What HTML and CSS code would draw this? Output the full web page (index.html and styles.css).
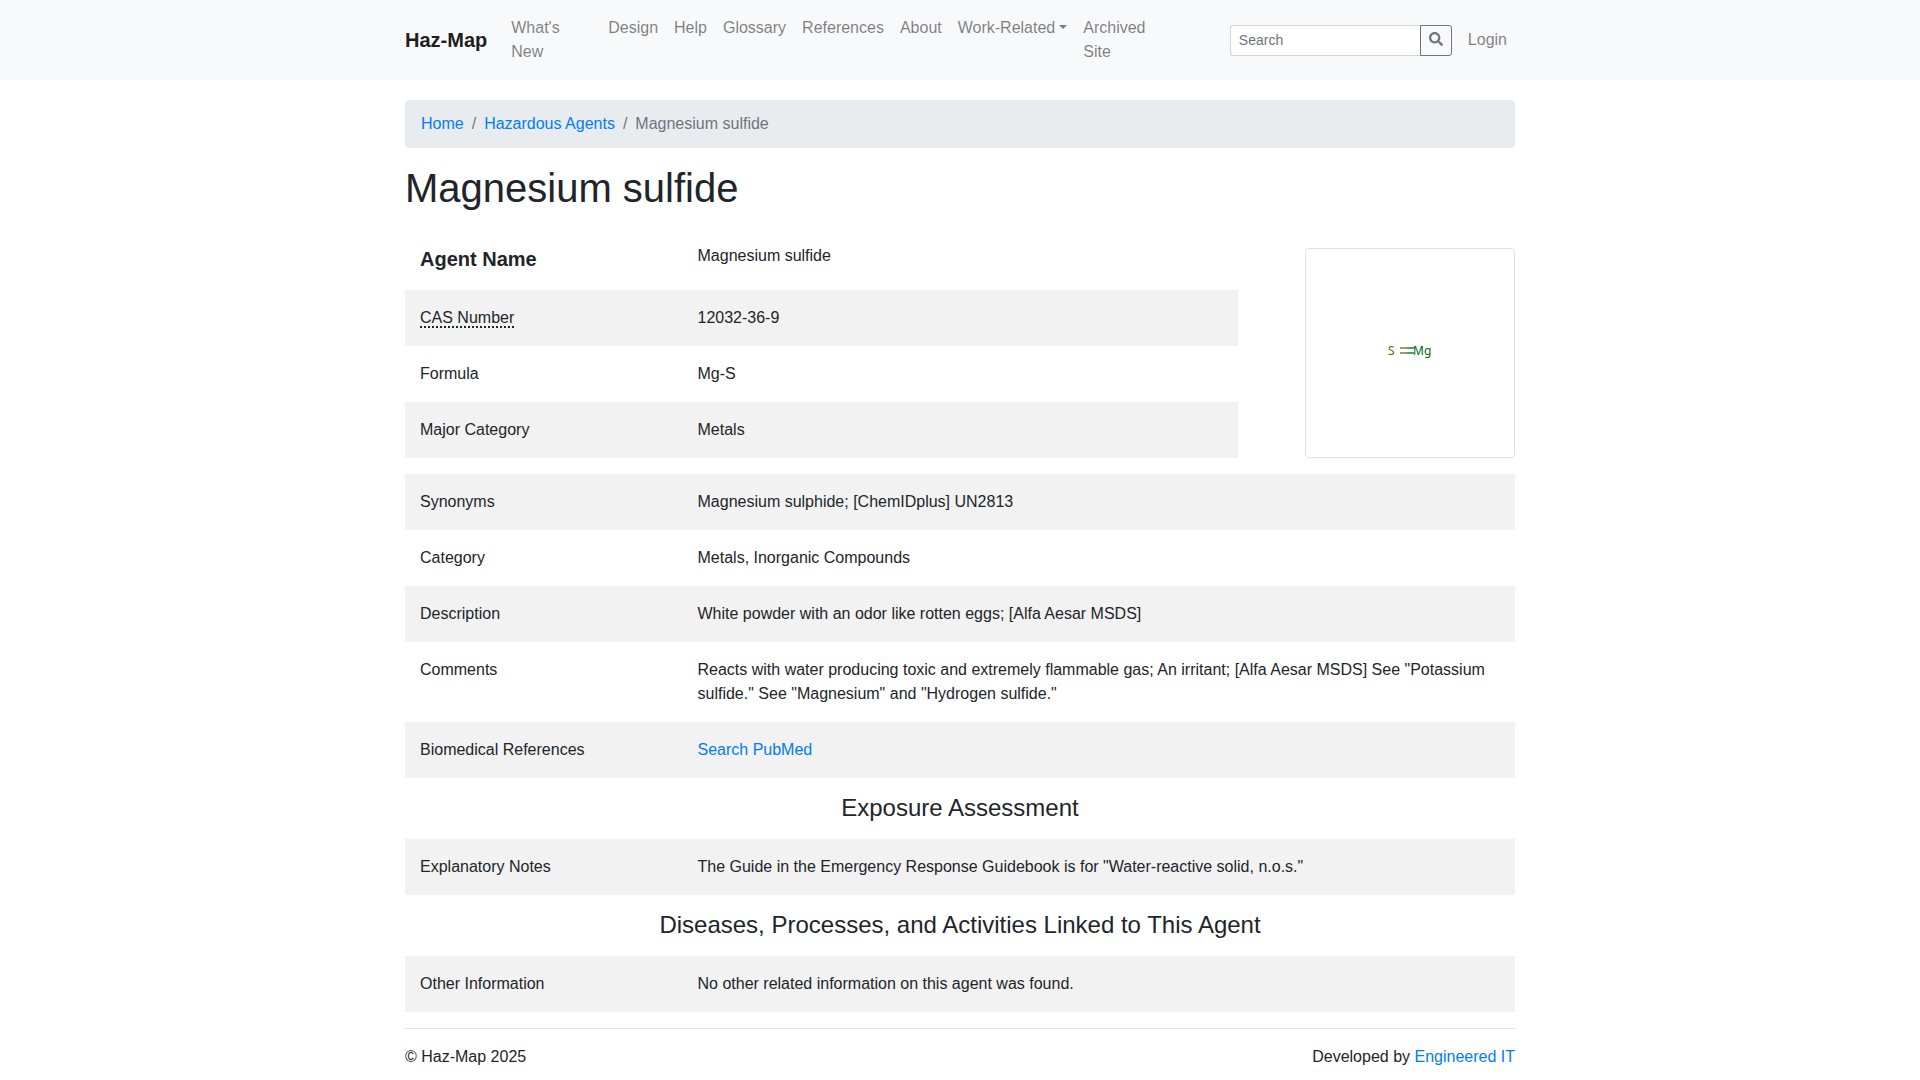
FILE: index.html
```html
<!DOCTYPE html>
<html lang="en">
<head>
  <meta charset="utf-8">
  <meta name="viewport" content="width=device-width, initial-scale=1">
  <title>Magnesium sulfide - Haz-Map</title>
  <link rel="stylesheet" href="styles.css">
</head>
<body>
  <header class="navbar">
    <div class="container navbar-inner">
      <a class="brand" href="#">Haz-Map</a>
      <nav class="nav-main" aria-label="Main">
        <ul class="nav-list">
          <li class="nav-wide"><a class="nav-link" href="#">What's<br>New</a></li>
          <li><a class="nav-link" href="#">Design</a></li>
          <li><a class="nav-link" href="#">Help</a></li>
          <li><a class="nav-link" href="#">Glossary</a></li>
          <li><a class="nav-link" href="#">References</a></li>
          <li><a class="nav-link" href="#">About</a></li>
          <li><a class="nav-link dropdown" href="#">Work-Related</a></li>
          <li><a class="nav-link" href="#">Archived<br>Site</a></li>
        </ul>
      </nav>
      <form class="search">
        <input class="search-input" type="search" placeholder="Search" aria-label="Search">
        <button class="search-button" type="submit" aria-label="Submit search">
          <svg class="search-icon" viewBox="0 0 512 512" aria-hidden="true"><path fill="currentColor" d="M505 442.7L405.3 343c-4.500-4.500-10.600-7-17-7H372c27.600-35.300 44-79.700 44-128C416 93.100 322.900 0 208 0S0 93.100 0 208s93.100 208 208 208c48.300 0 92.700-16.400 128-44v16.300c0 6.400 2.500 12.500 7 17l99.700 99.700c9.400 9.400 24.600 9.400 33.900 0l28.300-28.300c9.400-9.400 9.400-24.600.1-34zM208 336c-70.700 0-128-57.200-128-128 0-70.700 57.200-128 128-128 70.700 0 128 57.200 128 128 0 70.700-57.200 128-128 128z"/></svg>
        </button>
      </form>
      <a class="nav-link" href="#">Login</a>
    </div>
  </header>

  <main class="container">
    <nav aria-label="Breadcrumb">
      <ol class="breadcrumb">
        <li><a href="#">Home</a></li>
        <li><a href="#">Hazardous Agents</a></li>
        <li aria-current="page">Magnesium sulfide</li>
      </ol>
    </nav>

    <h1 class="title">Magnesium sulfide</h1>

    <div class="summary">
      <dl class="details summary-details">
        <div class="row"><dt class="agent-label">Agent Name</dt><dd>Magnesium sulfide</dd></div>
        <div class="row shaded"><dt><abbr title="Chemical Abstracts Service">CAS Number</abbr></dt><dd>12032-36-9</dd></div>
        <div class="row"><dt>Formula</dt><dd>Mg-S</dd></div>
        <div class="row shaded"><dt>Major Category</dt><dd>Metals</dd></div>
      </dl>
      <figure class="structure">
        <svg class="molecule" viewBox="0 0 200 200" role="img" aria-label="Magnesium sulfide structure">
          <g class="sulfur">
            <text x="78" y="102">S</text>
            <path d="M90 95H97M90 100H97"/>
          </g>
          <g class="magnesium">
            <path d="M97 95H104M97 100H104"/>
            <text x="103" y="102">M</text>
            <text x="114" y="102">g</text>
          </g>
        </svg>
      </figure>
    </div>

    <dl class="details">
      <div class="row shaded"><dt>Synonyms</dt><dd>Magnesium sulphide; [ChemIDplus] UN2813</dd></div>
      <div class="row"><dt>Category</dt><dd>Metals, Inorganic Compounds</dd></div>
      <div class="row shaded"><dt>Description</dt><dd>White powder with an odor like rotten eggs; [Alfa Aesar MSDS]</dd></div>
      <div class="row"><dt>Comments</dt><dd>Reacts with water producing toxic and extremely flammable gas; An irritant; [Alfa Aesar MSDS] See "Potassium sulfide." See "Magnesium" and "Hydrogen sulfide."</dd></div>
      <div class="row shaded"><dt>Biomedical References</dt><dd><a href="#">Search PubMed</a></dd></div>
    </dl>

    <h2 class="section-title">Exposure Assessment</h2>
    <dl class="details">
      <div class="row shaded"><dt>Explanatory Notes</dt><dd>The Guide in the Emergency Response Guidebook is for "Water-reactive solid, n.o.s."</dd></div>
    </dl>

    <h2 class="section-title">Diseases, Processes, and Activities Linked to This Agent</h2>
    <dl class="details">
      <div class="row shaded"><dt>Other Information</dt><dd>No other related information on this agent was found.</dd></div>
    </dl>
  </main>

  <footer class="container">
    <div class="footer-inner">
      <span>© Haz-Map 2025</span>
      <span>Developed by <a href="#">Engineered IT</a></span>
    </div>
  </footer>
</body>
</html>
```

FILE: styles.css
```css
*,
*::before,
*::after {
  box-sizing: border-box;
}

body {
  margin: 0;
  background: #fff;
  color: #212529;
  font-family: "Liberation Sans", Arial, sans-serif;
  font-size: 16px;
  line-height: 24px;
}

a {
  color: #007bff;
  text-decoration: none;
}

a:hover {
  text-decoration: underline;
}

.container {
  width: 100%;
  max-width: 1140px;
  margin: 0 auto;
  padding: 0 15px;
}

/* Top bar */
.navbar {
  padding: 8px 0;
  background: #f8f9fa;
}

.navbar-inner {
  display: flex;
  align-items: center;
}

.brand {
  margin-right: 16px;
  color: rgba(0, 0, 0, 0.9);
  font-size: 20px;
  font-weight: 700;
  line-height: 30px;
}

.nav-main {
  flex: 1;
}

.nav-list {
  display: flex;
  margin: 0;
  padding: 0;
  list-style: none;
}

.nav-wide {
  width: 97px;
}

.nav-link {
  display: block;
  padding: 8px;
  color: rgba(0, 0, 0, 0.5);
}

.dropdown::after {
  content: "";
  display: inline-block;
  margin-left: 4px;
  vertical-align: 4px;
  border-top: 4px solid;
  border-right: 4px solid transparent;
  border-left: 4px solid transparent;
}

.search {
  display: flex;
  margin-right: 8px;
}

.search-input {
  width: 190px;
  height: 31px;
  padding: 4px 8px;
  border: 1px solid #ced4da;
  border-right: 0;
  border-radius: 3px 0 0 3px;
  background: #fff;
  color: #495057;
  font: inherit;
  font-size: 14px;
  line-height: 21px;
  appearance: none;
}

.search-input::placeholder {
  color: #6c757d;
  opacity: 1;
}

.search-button {
  width: 32px;
  height: 31px;
  padding: 4px 8px;
  border: 1px solid #6c757d;
  border-radius: 0 3px 3px 0;
  background: transparent;
  color: #6c757d;
  font: inherit;
  font-size: 14px;
  line-height: 21px;
}

.search-icon {
  display: block;
  width: 14px;
  height: 14px;
  margin-bottom: 2px;
}

/* Page heading */
.breadcrumb {
  display: flex;
  margin: 20px 0 16px;
  padding: 12px 16px;
  border-radius: 4px;
  background: #e9ecef;
  color: #6c757d;
  list-style: none;
}

.breadcrumb li + li::before {
  content: "/";
  padding: 0 8px;
}

.title {
  margin: 0 0 16px;
  font-size: 40px;
  font-weight: 500;
  line-height: 48px;
}

/* Agent details */
.summary {
  display: flex;
  justify-content: space-between;
  align-items: flex-end;
  margin-bottom: 16px;
}

.summary-details {
  width: 75%;
}

.details {
  margin: 0;
}

.row {
  display: grid;
  grid-template-columns: 25% 75%;
}

.summary-details .row {
  grid-template-columns: 1fr 2fr;
}

.shaded {
  background: #f2f2f2;
}

.row dt,
.row dd {
  margin: 0;
  padding: 16px 15px;
}

.row .agent-label {
  font-size: 20px;
  font-weight: 700;
  line-height: 30px;
}

abbr {
  text-decoration: underline dotted 2px;
  text-decoration-skip-ink: none;
  text-underline-offset: 3px;
  cursor: help;
}

.structure {
  margin: 0;
  padding: 4px;
  border: 1px solid #dee2e6;
  border-radius: 4px;
}

.molecule {
  display: block;
  width: 200px;
  height: 200px;
  font-family: "Noto Sans", sans-serif;
  font-size: 12px;
}

.sulfur {
  fill: #666600;
}

.magnesium {
  fill: #006611;
}

.sulfur path {
  stroke: #857a33;
  stroke-width: 1.5;
}

.magnesium path {
  stroke: #198033;
  stroke-width: 1.5;
}

.section-title {
  margin: 0;
  padding: 16px 15px 17px;
  font-size: 24px;
  font-weight: 500;
  line-height: 28px;
  text-align: center;
}

/* Footer */
.footer-inner {
  display: flex;
  justify-content: space-between;
  margin: 16px 0 0;
  padding: 16px 0 8px;
  border-top: 1px solid rgba(0, 0, 0, 0.1);
}
```
